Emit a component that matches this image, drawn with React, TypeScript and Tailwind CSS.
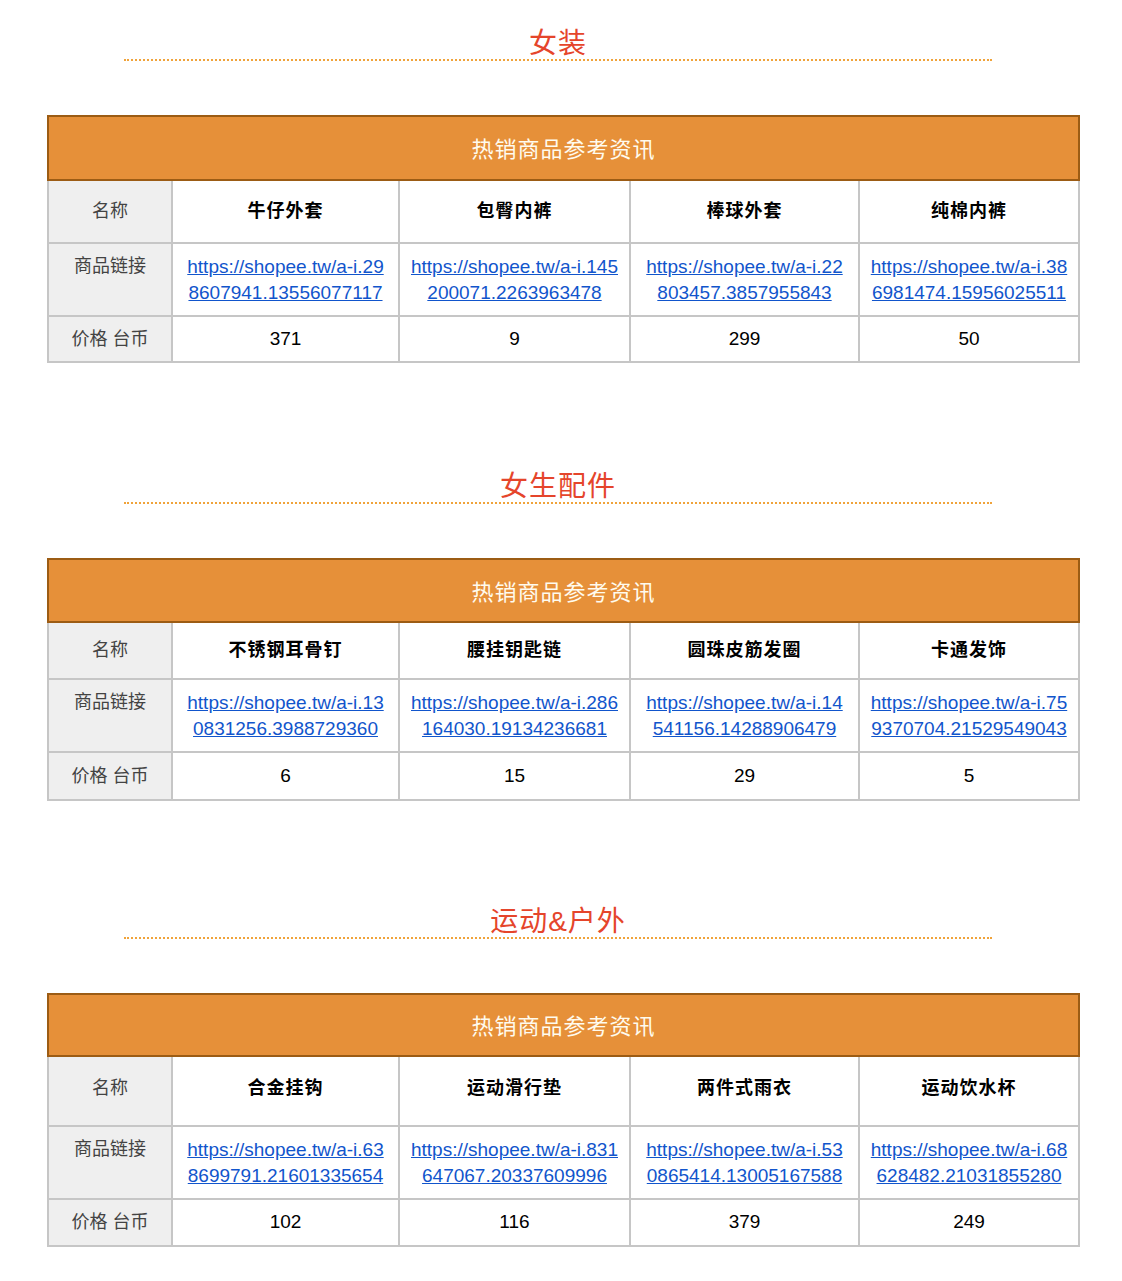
import React from "react";

type Item = { name: string; l1: string; l2: string; price: string };
type Section = { title: string; pt: number; head: number; rows: [number, number, number]; namePb: number; items: Item[] };

const sections: Section[] = [
  {
    title: "女装",
    pt: 24,
    head: 64,
    rows: [63, 73, 46],
    namePb: 0,
    items: [
      { name: "牛仔外套", l1: "https://shopee.tw/a-i.29", l2: "8607941.13556077117", price: "371" },
      { name: "包臀内裤", l1: "https://shopee.tw/a-i.145", l2: "200071.2263963478", price: "9" },
      { name: "棒球外套", l1: "https://shopee.tw/a-i.22", l2: "803457.3857955843", price: "299" },
      { name: "纯棉内裤", l1: "https://shopee.tw/a-i.38", l2: "6981474.15956025511", price: "50" },
    ],
  },
  {
    title: "女生配件",
    pt: 104,
    head: 63,
    rows: [57, 73, 48],
    namePb: 0,
    items: [
      { name: "不锈钢耳骨钉", l1: "https://shopee.tw/a-i.13", l2: "0831256.3988729360", price: "6" },
      { name: "腰挂钥匙链", l1: "https://shopee.tw/a-i.286", l2: "164030.19134236681", price: "15" },
      { name: "圆珠皮筋发圈", l1: "https://shopee.tw/a-i.14", l2: "541156.14288906479", price: "29" },
      { name: "卡通发饰", l1: "https://shopee.tw/a-i.75", l2: "9370704.21529549043", price: "5" },
    ],
  },
  {
    title: "运动&户外",
    pt: 101,
    head: 62,
    rows: [70, 73, 47],
    namePb: 6,
    items: [
      { name: "合金挂钩", l1: "https://shopee.tw/a-i.63", l2: "8699791.21601335654", price: "102" },
      { name: "运动滑行垫", l1: "https://shopee.tw/a-i.831", l2: "647067.20337609996", price: "116" },
      { name: "两件式雨衣", l1: "https://shopee.tw/a-i.53", l2: "0865414.13005167588", price: "379" },
      { name: "运动饮水杯", l1: "https://shopee.tw/a-i.68", l2: "628482.21031855280", price: "249" },
    ],
  },
];

const font = { fontFamily: '"Liberation Sans", "Noto Sans CJK SC", sans-serif' };

const ProductTable = ({ s }: { s: Section }) => (
  <table className="table-fixed border-collapse w-[1031px] ml-[47px]">
    <colgroup>
      <col className="w-[124px]" />
      <col className="w-[227px]" />
      <col className="w-[231px]" />
      <col className="w-[229px]" />
      <col className="w-[220px]" />
    </colgroup>
    <thead>
      <tr style={{ height: s.head }}>
        <th
          colSpan={5}
          className="bg-[#e69039] border-2 border-[#9c5c14] pt-[3px] text-[22px] font-normal text-[#fffbee] tracking-[1px] text-center"
        >
          热销商品参考资讯
        </th>
      </tr>
    </thead>
    <tbody>
      <tr style={{ height: s.rows[0] }}>
        <td className="bg-[#efefef] border-2 border-[#c6c6c6] text-[18px] text-[#434343] text-center align-middle" style={{ paddingBottom: s.namePb }}>
          名称
        </td>
        {s.items.map((it) => (
          <td
            key={it.name}
            className="border-2 border-[#c6c6c6] text-[18px] font-bold text-black text-center align-middle tracking-[1px]"
            style={{ paddingBottom: s.namePb }}
          >
            {it.name}
          </td>
        ))}
      </tr>
      <tr style={{ height: s.rows[1] }}>
        <td className="bg-[#efefef] border-2 border-[#c6c6c6] text-[18px] text-[#434343] text-center align-top pt-[10px] leading-[25px]">商品链接</td>
        {s.items.map((it) => (
          <td key={it.name} className="border-2 border-[#c6c6c6] text-center align-top pt-[10px]">
            <a className="text-[19px] leading-[25px] text-[#1155cc] underline whitespace-nowrap" href="#">
              {it.l1}
              <br />
              {it.l2}
            </a>
          </td>
        ))}
      </tr>
      <tr style={{ height: s.rows[2] }}>
        <td className="bg-[#efefef] border-2 border-[#c6c6c6] text-[18px] text-[#434343] text-center align-middle">价格 台币</td>
        {s.items.map((it) => (
          <td key={it.name} className="border-2 border-[#c6c6c6] text-[19px] text-black text-center align-middle">
            {it.price}
          </td>
        ))}
      </tr>
    </tbody>
  </table>
);

export default function App() {
  return (
    <div className="w-[1122px] min-h-[1281px] bg-white" style={font}>
      {sections.map((s) => (
        <section key={s.title} style={{ paddingTop: s.pt }}>
          <div className="ml-[124px] w-[868px] border-b-2 border-dotted border-[#f0a33a] text-center pt-[4px] text-[28px] leading-[31px] text-[#e5452b] tracking-[1px]">
            {s.title}
          </div>
          <div className="h-[54px]" />
          <ProductTable s={s} />
        </section>
      ))}
    </div>
  );
}
